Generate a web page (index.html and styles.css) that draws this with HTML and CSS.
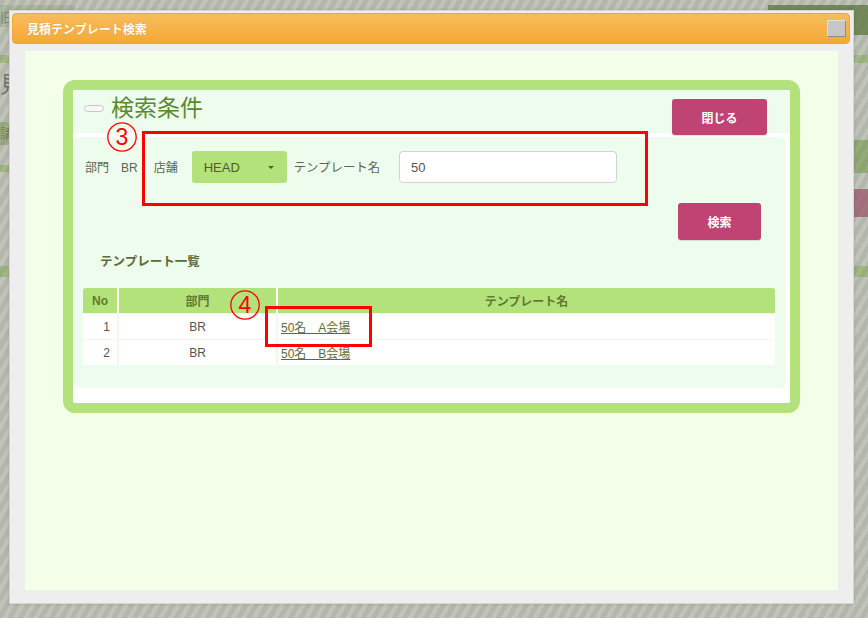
FILE: index.html
```html
<!DOCTYPE html>
<html lang="ja">
<head>
    <meta charset="UTF-8">
    <meta name="viewport" content="width=device-width, initial-scale=1.0">
    <title>見積テンプレート検索</title>
    <link rel="stylesheet" href="styles.css">
</head>
<body>
    <!-- page under the dialog -->
    <div class="page">
        <div class="page-head">
            <div class="head-left">旧</div>
            <div class="head-right">見積</div>
        </div>
        <div class="page-rule"></div>
        <h1 class="page-title">見</h1>
        <div class="page-tools">
            <div class="tools-left">
                <div class="tool-tab">請</div>
                <div class="tool-bar"></div>
            </div>
            <div class="tools-right">
                <div class="tool-block"></div>
                <div class="tool-btn">見積</div>
            </div>
        </div>
        <div class="page-rule page-rule-low"></div>
    </div>

    <div class="overlay"></div>

    <div class="dialog">
        <div class="dialog-title">
            <span>見積テンプレート検索</span>
            <span class="dialog-close"></span>
        </div>
        <div class="dialog-body">
            <div class="panel">
                <div class="panel-head">
                    <span class="pill"></span>
                    <h2 class="panel-title">検索条件</h2>
                    <button class="btn btn-close">閉じる</button>
                </div>
                <div class="panel-main">
                    <div class="search-row">
                        <span class="lbl lbl-dept">部門</span>
                        <span class="lbl lbl-br">BR</span>
                        <span class="lbl lbl-store">店舗</span>
                        <div class="store-select">
                            <span>HEAD</span>
                            <span class="caret"></span>
                        </div>
                        <span class="lbl lbl-name">テンプレート名</span>
                        <input class="name-input" type="text" value="50">
                    </div>
                    <div class="search-actions">
                        <button class="btn btn-search">検索</button>
                    </div>
                    <h3 class="list-title">テンプレート一覧</h3>
                    <table class="template-table">
                        <thead>
                            <tr>
                                <th class="col-no">No</th>
                                <th class="col-dept">部門</th>
                                <th class="col-name">テンプレート名</th>
                            </tr>
                        </thead>
                        <tbody>
                            <tr>
                                <td class="col-no">1</td>
                                <td class="col-dept">BR</td>
                                <td class="col-name"><a href="#">50名　A会場</a></td>
                            </tr>
                            <tr>
                                <td class="col-no">2</td>
                                <td class="col-dept">BR</td>
                                <td class="col-name"><a href="#">50名　B会場</a></td>
                            </tr>
                        </tbody>
                    </table>

                    <!-- step marks -->
                    <svg class="mark-num mark-num-3" viewBox="0 0 30 30" width="30" height="30">
                        <circle cx="15" cy="15" r="14.2" fill="none" stroke="#ff0000" stroke-width="1.3"/>
                        <text x="15" y="23.3" text-anchor="middle">3</text>
                    </svg>
                    <div class="mark-box mark-box-3"></div>
                    <svg class="mark-num mark-num-4" viewBox="0 0 30 30" width="30" height="30">
                        <circle cx="15" cy="15" r="14.2" fill="none" stroke="#ff0000" stroke-width="1.3"/>
                        <text x="15" y="23.3" text-anchor="middle">4</text>
                    </svg>
                    <div class="mark-box mark-box-4"></div>
                </div>
            </div>
        </div>
    </div>
</body>
</html>
```

FILE: styles.css
```css
body{
    margin:0;
    width:868px;
    height:618px;
    overflow:hidden;
    position:relative;
    background-color:#fff;
    font-family:"Liberation Sans","Noto Sans CJK JP",sans-serif;
}

/* page behind the dialog */
.page-head{
    display:flex;
    justify-content:space-between;
    align-items:flex-start;
    height:30px;
    padding-top:5px;
}
.head-left{
    width:75px;
    height:22px;
    background-color:#cfe3c2;
    color:#666;
    font-size:13px;
    line-height:26px;
}
.head-right{
    width:96px;
    height:30px;
    background-color:#3f6e10;
    color:#fff;
    font-size:13px;
    line-height:30px;
    padding-left:4px;
}
.page-rule{
    margin-top:20px;
    height:8px;
    background-color:#b3e27a;
}
.page-rule-low{
    margin-top:49px;
    height:11px;
}
.page-title{
    margin:10px 0 0;
    font-size:22px;
    line-height:24px;
    font-weight:normal;
    color:#333;
}
.page-tools{
    display:flex;
    justify-content:space-between;
    align-items:flex-start;
    margin-top:25px;
}
.tool-tab{
    width:110px;
    height:23px;
    background-color:#a9cf7f;
    color:#444;
    font-size:13px;
    line-height:23px;
}
.tool-bar{
    margin-top:20px;
    width:200px;
    height:7px;
    background-color:#b3e27a;
}
.tools-right{
    margin-top:18px;
    width:110px;
}
.tool-block{
    height:33px;
    background-color:#8fc35a;
}
.tool-btn{
    margin-top:16px;
    height:28px;
    background-color:#c0306f;
    color:#fff;
    font-size:13px;
    line-height:28px;
    padding-left:4px;
}

.overlay{
    position:absolute;
    left:0;
    top:0;
    right:0;
    bottom:0;
    background-image:repeating-linear-gradient(120deg, rgba(140,146,128,.66) 0 5px, rgba(150,156,138,.6) 5px 9px);
}

/* dialog */
.dialog{
    position:absolute;
    left:9px;
    top:10px;
    width:845px;
    height:594px;
    box-sizing:border-box;
    border:1px solid #d6d6d6;
    background-color:#eeeeee;
    padding:2px 3px 2px 2px;
    display:flex;
    flex-direction:column;
    box-shadow:0 0 3px rgba(0,0,0,.15);
}
.dialog-title{
    height:31px;
    box-sizing:border-box;
    border:1px solid #eea53a;
    border-radius:4px;
    background-image:linear-gradient(#f8bc5c,#f4a935);
    display:flex;
    align-items:center;
    justify-content:space-between;
    padding:0 3px 0 14px;
    color:#fff;
    font-size:12px;
    font-weight:bold;
    text-shadow:0 0 1px rgba(160,90,0,.4);
}
.dialog-close{
    width:19px;
    height:17px;
    box-sizing:border-box;
    background-color:#c6c6c6;
    border:1px solid #e2e2e2;
    border-right-color:#8c8c8c;
    border-bottom-color:#8c8c8c;
}
.dialog-body{
    flex:1;
    margin:7px 12px 11px 13px;
    background-color:#f4ffea;
    padding:29px 38px;
}

.panel{
    border:10px solid #b3e27a;
    border-radius:12px;
    background-color:#fff;
    padding-bottom:15px;
}
.panel-head{
    height:43px;
    display:flex;
    align-items:flex-start;
    background-color:#edfcec;
    border-radius:6px 6px 0 0;
    padding-left:11px;
}
.pill{
    margin-top:15px;
    width:20px;
    height:7px;
    box-sizing:border-box;
    border:1px solid #c8c8c8;
    border-radius:4px;
    background-color:#f7f7f7;
}
.panel-title{
    margin:6px 0 0 7px;
    font-size:23px;
    line-height:25px;
    font-weight:normal;
    color:#5a8a2e;
}
.btn{
    border:none;
    border-radius:3px;
    background-color:#bf4473;
    color:#fff;
    font-family:inherit;
    font-size:12px;
    font-weight:bold;
    box-shadow:0 1px 1px rgba(0,0,0,.12);
}
.btn-close{
    width:95px;
    height:36px;
    margin:9px 23px 0 auto;
    position:relative;
}

.panel-main{
    position:relative;
    margin:4px 4px 0 0;
    background-color:#edfcec;
    border-radius:6px;
    padding:14px 12px 23px 10px;
}
.search-row{
    display:flex;
    align-items:baseline;
    height:32px;
    padding-left:2px;
    font-size:12px;
    color:#5d6652;
}
.lbl-dept{ margin-right:12px; }
.lbl-br{ margin-right:16px; }
.lbl-store{ margin-right:14px; }
.lbl-name{
    margin:0 19px 0 7px;
    font-size:12.4px;
}
.store-select{
    width:95px;
    height:32px;
    box-sizing:border-box;
    display:flex;
    align-items:center;
    justify-content:space-between;
    padding:0 13px 0 12px;
    background-color:#b3e27a;
    border-radius:3px;
    font-size:13px;
    color:#4d5a3a;
}
.caret{
    width:0;
    height:0;
    border-left:3px solid transparent;
    border-right:3px solid transparent;
    border-top:3.5px solid #4d5a3a;
}
.name-input{
    width:218px;
    height:32px;
    box-sizing:border-box;
    border:1px solid #d2d2d2;
    border-radius:4px;
    padding:0 11px;
    background-color:#fff;
    font-family:inherit;
    font-size:13px;
    color:#555;
}
.search-actions{
    display:flex;
    justify-content:flex-end;
    margin-top:20px;
    padding-right:13px;
}
.btn-search{
    width:83px;
    height:37px;
}
.list-title{
    margin:14px 0 0;
    padding-left:17px;
    font-size:12.5px;
    line-height:16px;
    font-weight:bold;
    color:#5b6b3b;
}

.template-table{
    margin-top:18px;
    width:692px;
    border-collapse:separate;
    border-spacing:0;
    font-size:12px;
    table-layout:fixed;
}
.template-table th{
    height:25px;
    padding:0;
    background-color:#b3e27a;
    color:#5e7a32;
    font-weight:bold;
    text-align:center;
    border-right:2px solid #fff;
}
.template-table th:first-child{ border-top-left-radius:3px; }
.template-table th:last-child{
    border-right:none;
    border-top-right-radius:3px;
}
.template-table td{
    height:25px;
    padding:0;
    background-color:#fff;
    color:#555;
    border-right:2px solid #eefbe9;
    border-top:1px solid #eefbe9;
}
.template-table td:last-child{ border-right:none; }
.col-no{ width:34px; }
.col-dept{ width:157px; }
td.col-no{
    text-align:right;
    padding-right:7px;
}
td.col-dept{ text-align:center; }
td.col-name{ padding-left:3px; }
.template-table a{
    color:#5b6b3b;
    text-decoration:underline;
}

/* step marks */
.mark-box{
    position:absolute;
    box-sizing:border-box;
    border:3px solid #ff0000;
}
.mark-box-3{
    left:69px;
    top:-6px;
    width:506px;
    height:75px;
}
.mark-box-4{
    left:192px;
    top:169px;
    width:107px;
    height:41px;
}
.mark-num{
    position:absolute;
    overflow:visible;
}
.mark-num text{
    fill:#ff0000;
    font-family:"Liberation Sans",sans-serif;
    font-size:23px;
}
.mark-num-3{
    left:34px;
    top:-15px;
}
.mark-num-4{
    left:157px;
    top:153px;
}
```
